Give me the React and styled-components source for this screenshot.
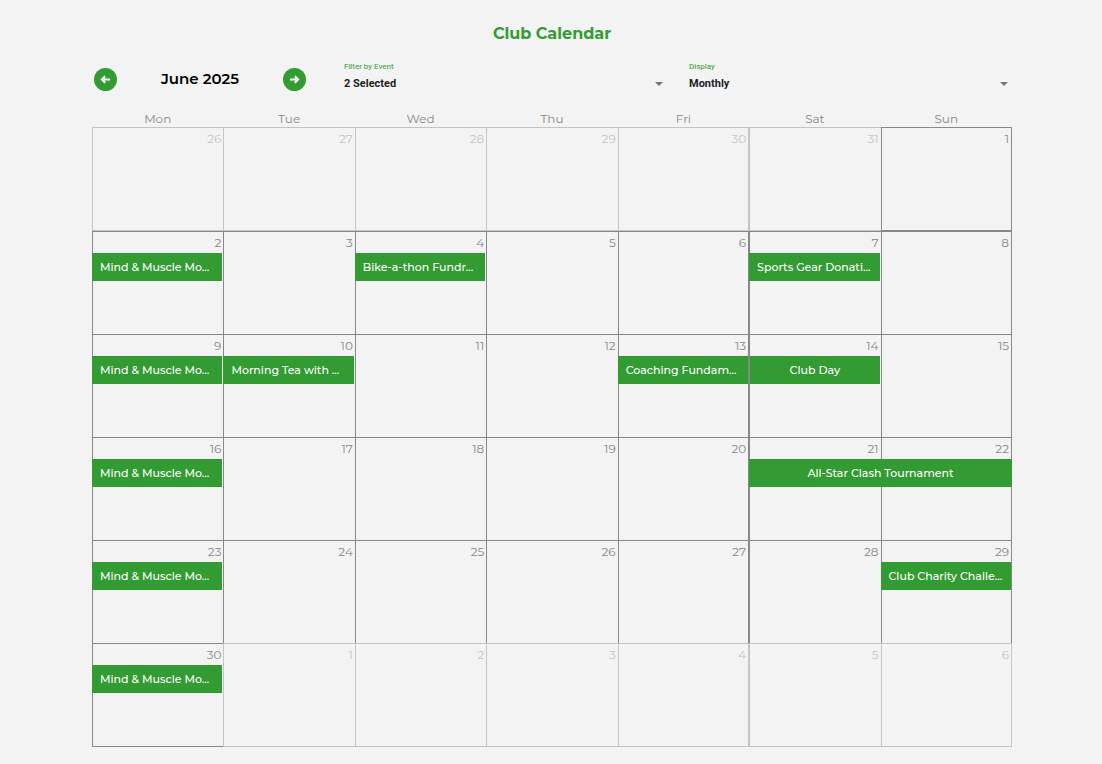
import React, { useState } from "react";
import styled, { createGlobalStyle } from "styled-components";

const GREEN = "#329b32";
const LINE = "#888888";
const LINE_MUTED = "#c4c4c4";

const GlobalStyle = createGlobalStyle`
  * {
    box-sizing: border-box;
  }

  body {
    margin: 0;
    background-color: #f3f3f3;
    font-family: Montserrat, Inter, sans-serif;
  }
`;

const Page = styled.main`
  padding: 24px 90px 16px 92px;
`;

const Title = styled.h1`
  margin: 0;
  font-size: 16px;
  line-height: 20px;
  font-weight: 700;
  text-align: center;
  color: ${GREEN};
`;

const Toolbar = styled.div`
  display: grid;
  grid-template-columns: 2fr 3fr 3fr;
  align-items: start;
  margin-top: 16px;
`;

const MonthNav = styled.div`
  display: flex;
  align-items: center;
  justify-content: space-between;
  padding: 7px 16px 0 2px;
`;

const NavButton = styled.button`
  display: flex;
  align-items: center;
  justify-content: center;
  width: 23px;
  height: 23px;
  padding: 0;
  border: none;
  border-radius: 50%;
  background-color: ${GREEN};
  color: #ffffff;
  cursor: pointer;
`;

const MonthLabel = styled.h2`
  margin: 0;
  font-size: 15px;
  line-height: 24px;
  font-weight: 600;
  color: #000000;
`;

const Field = styled.div`
  display: grid;
  padding: 0 4px 0 22px;
  font-family: Roboto, sans-serif;
`;

const FieldLabel = styled.label`
  font-size: 8px;
  line-height: 13px;
  color: ${GREEN};
`;

const SelectBox = styled.div`
  display: grid;
  align-items: center;

  > * {
    grid-area: 1 / 1;
  }

  svg {
    justify-self: end;
    pointer-events: none;
    color: #757575;
  }
`;

const Select = styled.select`
  appearance: none;
  width: 100%;
  height: 21px;
  padding: 0;
  border: none;
  background: transparent;
  font-family: inherit;
  font-size: 11px;
  font-weight: 700;
  color: #1f1f1f;
`;

const CalendarTable = styled.table`
  width: 100%;
  margin-top: 17px;
  table-layout: fixed;
  border-collapse: separate;
  border-spacing: 0;
`;

const Weekday = styled.th`
  height: 16px;
  padding: 0;
  font-size: 12px;
  line-height: 16px;
  font-weight: 400;
  color: ${LINE};
`;

const Day = styled.td`
  height: 103px;
  padding: 0;
  vertical-align: top;
  border: 0 solid ${(props) => (props.$muted ? LINE_MUTED : LINE)};
  border-top-width: 1px;
  border-left-width: 1px;

  tr:first-child > &,
  tr:last-child > & {
    height: 104px;
    border-bottom-width: 1px;
  }

  &:nth-child(5),
  &:last-child {
    border-right-width: 1px;
  }
`;

const DayNumber = styled.div`
  padding: 0 2px;
  font-size: 12px;
  line-height: 21px;
  text-align: right;
  color: ${(props) => (props.$muted ? LINE_MUTED : LINE)};
`;

// $reach is how far the bar runs past the inner width of its cells
const EventBar = styled.button`
  display: block;
  position: relative;
  z-index: 1;
  width: calc(${(props) => (props.$span || 1) * 100}% + ${(props) => props.$reach || 0}px);
  height: 28px;
  margin: 0 0 0 ${(props) => (props.$joined ? "0" : "-1px")};
  padding: 0 8px;
  border: none;
  background-color: ${GREEN};
  font-family: inherit;
  font-size: 11px;
  line-height: 28px;
  font-weight: 500;
  color: #ffffff;
  text-align: ${(props) => (props.$centered ? "center" : "left")};
  white-space: nowrap;
  cursor: pointer;
`;

const weekdays = ["Mon", "Tue", "Wed", "Thu", "Fri", "Sat", "Sun"];

const mindMuscle = { title: "Mind & Muscle Mo..." };

const events = {
  2: mindMuscle,
  4: { title: "Bike-a-thon Fundr..." },
  7: { title: "Sports Gear Donati..." },
  9: mindMuscle,
  10: { title: "Morning Tea with ..." },
  13: { title: "Coaching Fundam...", reach: 1 },
  14: { title: "Club Day", joined: true, centered: true, reach: -1 },
  16: mindMuscle,
  21: { title: "All-Star Clash Tournament", span: 2, centered: true, reach: 2 },
  23: mindMuscle,
  29: { title: "Club Charity Challe...", reach: 1 },
  30: mindMuscle,
};

// June 2025 starts on a Sunday, so the grid opens on Monday 26 May
const weeks = Array.from({ length: 6 }, (_, week) =>
  Array.from({ length: 7 }, (_, i) => {
    const offset = week * 7 + i - 5;
    if (offset < 1) return { day: offset + 31, muted: true };
    if (offset > 30) return { day: offset - 30, muted: true };
    return { day: offset, event: events[offset] };
  })
);

const ArrowIcon = ({ flip }) => (
  <svg width="11" height="11" viewBox="0 0 11 11" aria-hidden="true">
    <path
      d={flip ? "M1 5.5H9M5.8 2.2L9.1 5.5L5.8 8.8" : "M10 5.5H2M5.2 2.2L1.9 5.5L5.2 8.8"}
      fill="none"
      stroke="currentColor"
      strokeWidth="2"
    />
  </svg>
);

const CaretIcon = () => (
  <svg width="8" height="4" viewBox="0 0 8 4" aria-hidden="true">
    <path d="M0 0H8L4 4Z" fill="currentColor" />
  </svg>
);

const Dropdown = ({ id, label, options }) => {
  const [value, setValue] = useState(options[0]);

  return (
    <Field>
      <FieldLabel htmlFor={id}>{label}</FieldLabel>
      <SelectBox>
        <Select id={id} value={value} onChange={(e) => setValue(e.target.value)}>
          {options.map((option) => (
            <option key={option}>{option}</option>
          ))}
        </Select>
        <CaretIcon />
      </SelectBox>
    </Field>
  );
};

const ClubCalendar = () => {
  return (
    <Page>
      <GlobalStyle />
      <Title>Club Calendar</Title>

      {/* Month navigation and filters */}
      <Toolbar>
        <MonthNav>
          <NavButton type="button" aria-label="Previous month">
            <ArrowIcon />
          </NavButton>
          <MonthLabel>June 2025</MonthLabel>
          <NavButton type="button" aria-label="Next month">
            <ArrowIcon flip />
          </NavButton>
        </MonthNav>
        <Dropdown id="event-filter" label="Filter by Event" options={["2 Selected"]} />
        <Dropdown id="display-mode" label="Display" options={["Monthly"]} />
      </Toolbar>

      {/* Month grid */}
      <CalendarTable>
        <thead>
          <tr>
            {weekdays.map((name) => (
              <Weekday key={name} scope="col">
                {name}
              </Weekday>
            ))}
          </tr>
        </thead>
        <tbody>
          {weeks.map((days, week) => (
            <tr key={week}>
              {days.map(({ day, muted, event }) => (
                <Day key={day} $muted={muted}>
                  <DayNumber $muted={muted}>{day}</DayNumber>
                  {event && (
                    <EventBar
                      type="button"
                      $span={event.span}
                      $reach={event.reach}
                      $joined={event.joined}
                      $centered={event.centered}
                    >
                      {event.title}
                    </EventBar>
                  )}
                </Day>
              ))}
            </tr>
          ))}
        </tbody>
      </CalendarTable>
    </Page>
  );
};

export default ClubCalendar;
